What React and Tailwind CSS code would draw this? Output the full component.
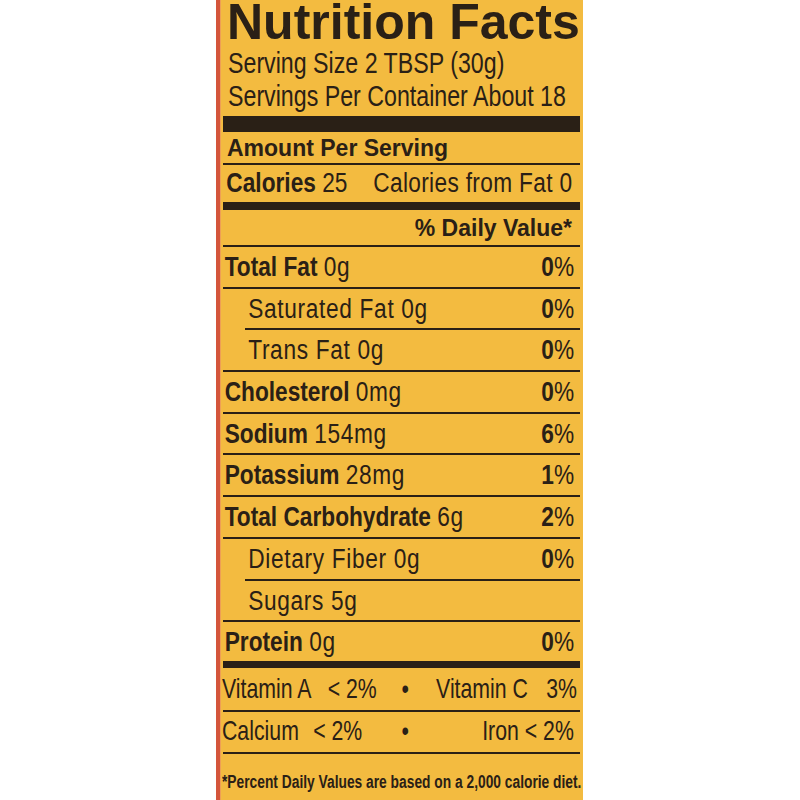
import React from "react";

const F = "font-['Liberation_Sans',Arial,sans-serif]";
const INK = "text-[#2a2016]";

function Line({ indent, thick }) {
  return (
    <div
      className={`${thick ? "h-[7px]" : "h-[2px]"} bg-[#2a2016] ${indent ? "ml-[22px]" : ""}`}
    />
  );
}

function Pct({ d }) {
  return (
    <span>
      <span className="font-bold">{d}</span>
      <span>%</span>
    </span>
  );
}

const rows = [
  { b: "Total Fat", v: "0g", p: "0" },
  { v: "Saturated Fat 0g", p: "0", indent: true, lineIndent: true },
  { v: "Trans Fat 0g", p: "0", indent: true },
  { b: "Cholesterol", v: "0mg", p: "0" },
  { b: "Sodium", v: "154mg", p: "6" },
  { b: "Potassium", v: "28mg", p: "1" },
  { b: "Total Carbohydrate", v: "6g", p: "2" },
  { v: "Dietary Fiber 0g", p: "0", indent: true, lineIndent: true },
  { v: "Sugars 5g", indent: true },
];

export default function App() {
  return (
    <div className="w-[800px] h-[800px] bg-white flex overflow-hidden">
      <div className="ml-[216px] w-[367px] shrink-0 h-full flex">
        <div className="w-[4px] shrink-0 bg-[#d4553b]" />
        <div className="w-[1px] shrink-0 bg-[#ef9f55]" />
        <div className={`flex-1 min-w-0 overflow-hidden bg-[#f3bb40] pl-[2px] pr-[3px] ${INK} ${F}`}>
          {/* Title */}
          <div className="h-[47px] leading-[44px] text-[50px] font-bold pl-[4px] whitespace-nowrap">
            Nutrition Facts
          </div>
          <div className="pl-[5px]">
            <div className="h-[33px] w-[440px] origin-left scale-x-[0.8] leading-[33px] text-[29px] whitespace-nowrap">
              Serving Size 2 TBSP (30g)
            </div>
            <div className="h-[33px] w-[440px] origin-left scale-x-[0.8] leading-[33px] text-[29px] whitespace-nowrap">
              Servings Per Container About 18
            </div>
          </div>
          <div className="mt-[3px] h-[16px] bg-[#2a2016]" />
          <div className="h-[31px] leading-[32px] text-[23px] font-bold pl-[4px] whitespace-nowrap">
            Amount Per Serving
          </div>
          <Line />
          <div className="h-[37px] w-[425px] origin-left scale-x-[0.84] leading-[37px] text-[27px] pl-[4px] pr-[9px] flex justify-between whitespace-nowrap">
            <span>
              <span className="font-bold">Calories</span> 25
            </span>
            <span className="tracking-[0.4px]">Calories from Fat 0</span>
          </div>
          <div className="h-[8px] bg-[#2a2016]" />
          <div className="h-[35px] leading-[36px] text-[23px] font-bold pr-[8px] text-right whitespace-nowrap">
            % Daily Value*
          </div>
          <Line />
          {rows.map((r, i) => (
            <div key={i} className="h-[41.7px]">
              <div
                className={`h-[39.7px] w-[425px] origin-left scale-x-[0.84] leading-[41px] text-[27px] pr-[7px] flex justify-between whitespace-nowrap ${
                  r.indent ? "pl-[30px]" : "pl-[2px]"
                }`}
              >
                <span>
                  {r.b && <span className="font-bold">{r.b} </span>}
                  <span className="tracking-[0.8px]">{r.v}</span>
                </span>
                {r.p && <Pct d={r.p} />}
              </div>
              <Line indent={r.lineIndent} />
            </div>
          ))}
          <div className="h-[39px] w-[425px] origin-left scale-x-[0.84] leading-[40px] text-[27px] pl-[2px] pr-[7px] flex justify-between whitespace-nowrap">
            <span>
              <span className="font-bold">Protein</span>{" "}
              <span className="tracking-[0.8px]">0g</span>
            </span>
            <Pct d="0" />
          </div>
          <Line thick />
          <div className="-ml-[1px]">
            <div className="h-[42px] w-[470px] origin-left scale-x-[0.76] leading-[41px] text-[28px] flex whitespace-nowrap">
              <div className="w-[234px] flex">
                <span className="w-[139px]">Vitamin A</span>
                <span>&lt; 2%</span>
              </div>
              <div className="w-[14px] text-center">•</div>
              <div className="flex-1 flex justify-end gap-[24px] pr-[3px]">
                <span>Vitamin C</span>
                <span>3%</span>
              </div>
            </div>
          </div>
          <Line />
          <div className="-ml-[1px]">
            <div className="h-[40px] w-[470px] origin-left scale-x-[0.76] leading-[37px] text-[28px] flex whitespace-nowrap">
              <div className="w-[234px] flex">
                <span className="w-[120px]">Calcium</span>
                <span>&lt; 2%</span>
              </div>
              <div className="w-[14px] text-center">•</div>
              <div className="flex-1 flex justify-end pr-[7px]">
                <span>Iron &lt; 2%</span>
              </div>
            </div>
          </div>
          <Line />
          <div className="-ml-[1px]">
            <div className="w-[470px] origin-left scale-x-[0.766] pt-[17px] leading-[22px] text-[18px] font-bold whitespace-nowrap">
              *Percent Daily Values are based on a 2,000 calorie diet.
            </div>
          </div>
        </div>
      </div>
    </div>
  );
}
